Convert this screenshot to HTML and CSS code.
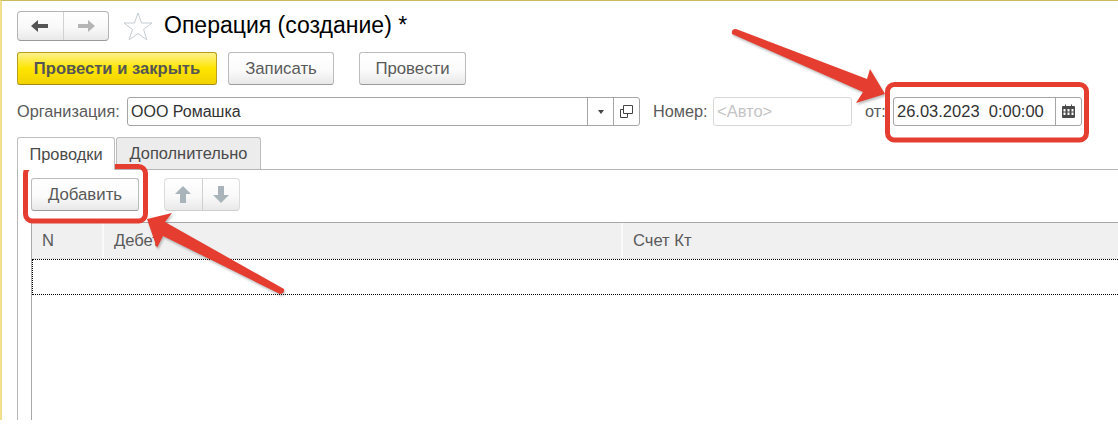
FILE: index.html
```html
<!DOCTYPE html>
<html>
<head>
  <meta charset="utf-8" />
  <title>Операция (создание)</title>
  <link rel="stylesheet" href="styles.css">
</head>
<body>
  <div class="page">

    <div class="head-row">
      <div class="nav-group">
        <a class="nav-btn">
          <svg width="18" height="14" viewBox="0 0 18 14"><path d="M0 7 L7 1 V5 H17 V9 H7 V13 Z" fill="#555"/></svg>
        </a>
        <a class="nav-btn">
          <svg width="18" height="14" viewBox="0 0 18 14"><path d="M18 7 L11 1 V5 H1 V9 H11 V13 Z" fill="#b5b5b5"/></svg>
        </a>
      </div>
      <svg class="star" width="30" height="29" viewBox="0 0 30 29"><path d="M15 1 L18.6 11 H29 L20.6 17.4 L23.8 27.8 L15 21.6 L6.2 27.8 L9.4 17.4 L1 11 H11.4 Z" fill="#fff" stroke="#c4ccd2" stroke-width="1"/></svg>
      <span class="title">Операция (создание) *</span>
    </div>

    <div class="button-row">
      <a class="button primary">Провести и закрыть</a>
      <a class="button save">Записать</a>
      <a class="button post">Провести</a>
    </div>

    <div class="field-row">
      <label class="label org-label">Организация:</label>
      <div class="input org-input">
        <span class="value">ООО Ромашка</span>
        <span class="addon drop"><i class="caret"></i></span>
        <span class="addon open">
          <svg width="15" height="15" viewBox="0 0 15 15" fill="none" stroke="#444"><path d="M4.5 1.5 H13.5 V9.5 H4.5 Z"/><path d="M4.5 5.5 H1.5 V13.5 H8.5 V9.5"/></svg>
        </span>
      </div>
      <label class="label num-label">Номер:</label>
      <div class="input num-input"><span class="value auto">&lt;Авто&gt;</span></div>
      <label class="label date-label">от:</label>
      <div class="input date-input">
        <span class="value">26.03.2023&nbsp; 0:00:00</span>
        <span class="addon cal">
          <svg class="cal-icon" width="13" height="14" viewBox="0 0 13 14"><path d="M1 2 H3 V0.5 H4 V2 H9 V0.5 H10 V2 H12 Q13 2 13 3 V13 Q13 14 12 14 H1 Q0 14 0 13 V3 Q0 2 1 2 Z" fill="#4a4a4a"/><path d="M1.5 5 H3.5 V7.5 H1.5 Z M5.5 5 H7.5 V7.5 H5.5 Z M9.5 5 H11.5 V7.5 H9.5 Z M1.5 8.5 H3.5 V11 H1.5 Z M5.5 8.5 H7.5 V11 H5.5 Z M9.5 8.5 H11.5 V11 H9.5 Z" fill="#fff"/></svg>
        </span>
      </div>
    </div>

    <div class="tabs">
      <a class="tab current">Проводки</a>
      <a class="tab">Дополнительно</a>
    </div>

    <div class="tab-body">
      <div class="table-bar">
        <a class="button add">Добавить</a>
        <div class="move-group">
          <a class="move-btn">
            <svg width="16" height="17" viewBox="0 0 16 17"><path d="M8 0 L16 8 H11 V17 H5 V8 H0 Z" fill="#a9b3ba"/></svg>
          </a>
          <a class="move-btn">
            <svg width="16" height="17" viewBox="0 0 16 17"><path d="M8 17 L16 9 H11 V0 H5 V9 H0 Z" fill="#a9b3ba"/></svg>
          </a>
        </div>
      </div>
      <div class="grid">
        <div class="grid-head">
          <span class="col col-n">N</span>
          <span class="col col-dt">Дебет</span>
          <span class="col col-kt">Счет Кт</span>
        </div>
        <div class="grid-row"></div>
      </div>
    </div>

  </div>

  <svg class="marks" width="1118" height="424" viewBox="0 0 1118 424">
    <g class="arrow">
      <path d="M732 34 Q731 29 736 29 L867 79 L870 69 L885 94 L856 103 L863 92 Z"/>
      <path d="M147 219 L172 213 L165 222 L284 289 Q285 293 280 294 L163 236 L157 248 Z"/>
    </g>
    <rect class="frame" x="887.5" y="84.5" width="199" height="55.5" rx="7"/>
    <rect class="frame" x="25.5" y="166.5" width="120" height="54.5" rx="7"/>
  </svg>
</body>
</html>
```

FILE: styles.css
```css
html, body {
  margin: 0;
  padding: 0;
  background: white;
}

body {
  width: 1118px;
  height: 424px;
  overflow: hidden;
  position: relative;
  font-family: "Liberation Sans", Arial, sans-serif;
  font-size: 16px;
  color: #4a4a4a;
}

.page {
  height: 420px;
  box-sizing: border-box;
  border-top: 1px solid #cdb960;
  border-left: 2px solid #f2df8c;
  padding: 10px 0 0 15px;
  overflow: hidden;
}

/* title line */
.head-row {
  display: flex;
  align-items: center;
  height: 30px;
}

.nav-group,
.move-group {
  display: flex;
  box-sizing: border-box;
  border-radius: 4px;
  background: linear-gradient(to bottom, #ffffff 0%, #f9f9f9 55%, #e9e9e9 100%);
}

.nav-group {
  width: 92px;
  height: 30px;
  border: 1px solid #b4b4b4;
  border-bottom-color: #999;
}

.nav-btn,
.move-btn {
  flex: 1;
  display: flex;
  align-items: center;
  justify-content: center;
}

.nav-btn + .nav-btn {
  border-left: 1px solid #d2d2d2;
}

.star {
  margin-left: 14px;
}

.title {
  margin-left: 11px;
  font-size: 23px;
  color: black;
  position: relative;
  top: -1px;
}

/* buttons */
.button-row {
  display: flex;
  margin-top: 11px;
}

.button {
  display: flex;
  align-items: center;
  justify-content: center;
  height: 33px;
  box-sizing: border-box;
  border: 1px solid #bcbcbc;
  border-bottom-color: #9a9a9a;
  border-radius: 3px;
  background: linear-gradient(to bottom, #ffffff 0%, #fbfbfb 55%, #e8e8e8 100%);
  color: #5a5a5a;
  font-size: 16.8px;
}

.button.primary {
  width: 200px;
  border-color: #b9a01c;
  border-bottom-color: #a18a10;
  background: linear-gradient(to bottom, #fdf28c 0%, #fee500 50%, #f2d200 100%);
  color: #555;
  font-size: 16.6px;
  font-weight: bold;
}

.button.save {
  width: 106px;
  margin-left: 11px;
}

.button.post {
  width: 107px;
  margin-left: 25px;
}

/* fields */
.field-row {
  display: flex;
  align-items: center;
  margin-top: 12px;
  height: 29px;
}

.label {
  font-size: 16.3px;
  color: #5a5a5a;
  white-space: nowrap;
}

.input {
  display: flex;
  height: 29px;
  box-sizing: border-box;
  border: 1px solid #a5a5a5;
  border-radius: 3px;
  background: white;
}

.value {
  flex: 1;
  line-height: 27px;
  padding-left: 3px;
  font-size: 16px;
  color: #333;
  white-space: nowrap;
}

.value.auto {
  color: #c4c4c4;
  font-size: 16.5px;
}

.date-input .value {
  font-size: 16.5px;
}

.addon {
  display: flex;
  align-items: center;
  justify-content: center;
  box-sizing: border-box;
  width: 26px;
  border-left: 1px solid #a5a5a5;
}

.caret {
  width: 0;
  height: 0;
  border-left: 3.5px solid transparent;
  border-right: 3.5px solid transparent;
  border-top: 4px solid #444;
}

.cal-icon {
  margin-top: -2px;
}

.org-label { width: 110px; }
.org-input { width: 513px; }
.num-label { margin-left: 13px; width: 60px; }
.num-input { width: 139px; border-color: #d8d8d8; }
.date-label { margin-left: 13px; width: 28px; }
.date-input { width: 189px; }

/* tabs */
.tabs {
  display: flex;
  margin-top: 11px;
  height: 32px;
}

.tab {
  display: flex;
  align-items: center;
  justify-content: center;
  box-sizing: border-box;
  width: 145px;
  margin-left: 1px;
  border: 1px solid #bdbdbd;
  border-bottom: 0;
  border-radius: 3px 3px 0 0;
  background: #ececec;
  font-size: 16.4px;
  color: #4a4a4a;
}

.tab.current {
  width: 98px;
  margin-left: 0;
  background: white;
  position: relative;
  z-index: 1;
  height: 33px;
}

.tab-body {
  border-top: 1px solid #b5b5b5;
  border-left: 1px solid #b5b5b5;
  height: 260px;
  padding: 8px 0 0 13px;
}

.table-bar {
  display: flex;
}

.button.add {
  width: 108px;
}

.move-group {
  width: 76px;
  height: 33px;
  margin-left: 25px;
  border: 1px solid #dcdcdc;
  border-bottom-color: #cfcfcf;
}

.move-btn + .move-btn {
  border-left: 1px solid #cfcfcf;
}

/* table */
.grid {
  margin-top: 11px;
  height: 220px;
  border-top: 1px solid #a8a8a8;
  border-left: 1px solid #a8a8a8;
}

.grid-head {
  display: flex;
  height: 35px;
  background: #f0f0f0;
  border-bottom: 1px solid #e2e2e2;
}

.col {
  box-sizing: border-box;
  line-height: 35px;
  padding-left: 10px;
  font-size: 16.6px;
  color: #5a5a5a;
  border-right: 2px solid #fafafa;
}

.col-n { width: 72px; }
.col-dt { width: 519px; }
.col-kt { flex: 1; border-right: 0; }

.grid-row {
  height: 34px;
  border: 1px dotted black;
  border-right: 0;
}

/* red marks drawn over the form */
.marks {
  position: absolute;
  left: 0;
  top: 0;
  pointer-events: none;
}

.arrow {
  fill: #e53d30;
  filter: drop-shadow(1px 2px 1px rgba(0, 0, 0, 0.25));
}

.frame {
  fill: none;
  stroke: #e53d30;
  stroke-width: 5;
}
```
